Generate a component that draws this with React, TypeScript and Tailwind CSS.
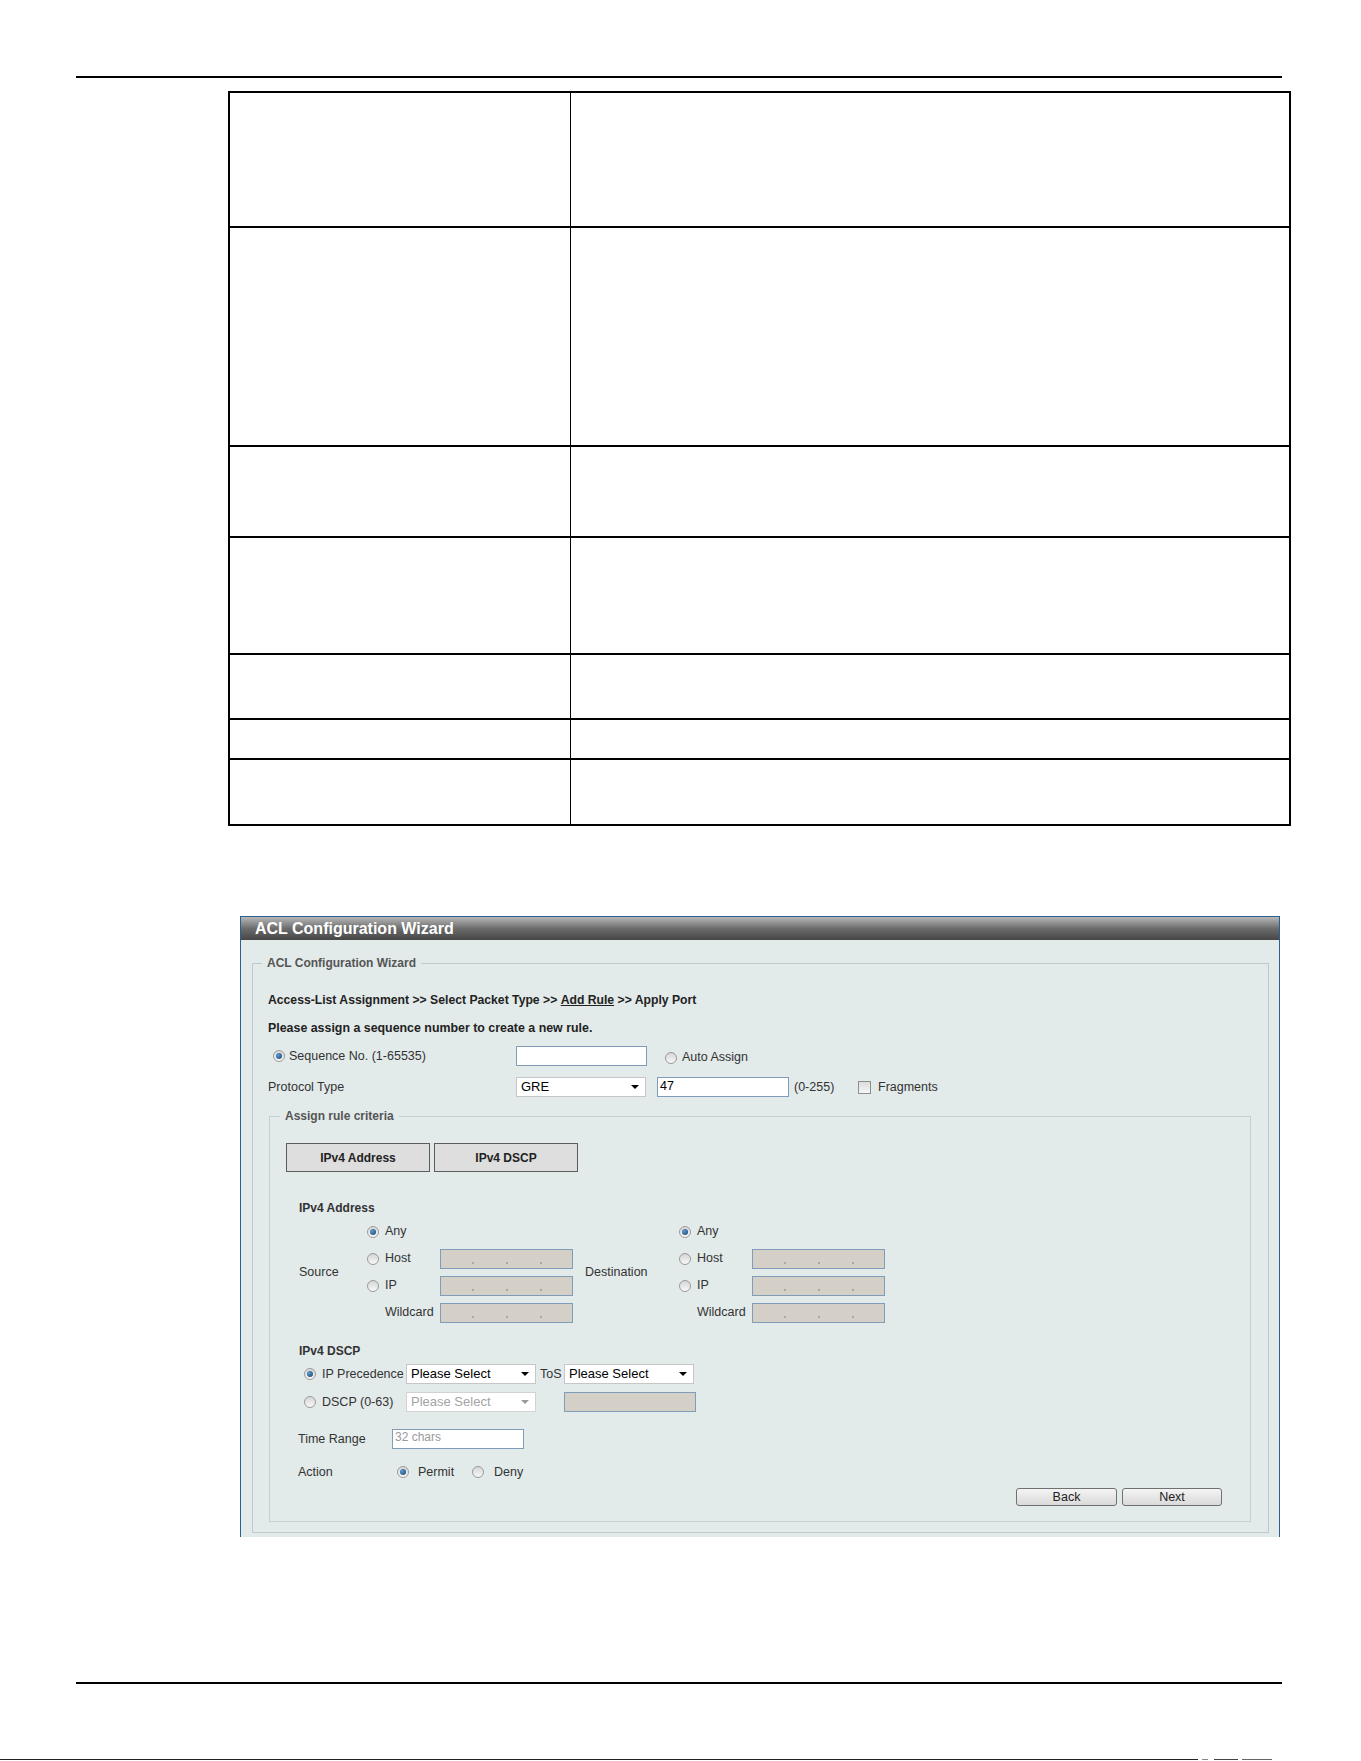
import React from "react";

const rowHeights = ["h-[135px]", "h-[219px]", "h-[91px]", "h-[117px]", "h-[65px]", "h-[40px]", "h-[64px]"];

function Radio({ checked }: { checked?: boolean }) {
    return (
        <span className="flex h-[12px] w-[12px] shrink-0 items-center justify-center rounded-full border border-[#9a9a9a] bg-[linear-gradient(to_bottom,#d6d6d6,#f8f8f8)]">
            {checked && (
                <span className="h-[6px] w-[6px] rounded-full bg-[radial-gradient(circle_at_35%_35%,#5f9ad0,#133f6a)]" />
            )}
        </span>
    );
}

function Arrow({ muted }: { muted?: boolean }) {
    return (
        <span
            className={`h-0 w-0 border-x-[4px] border-t-[4px] border-x-transparent ${
                muted ? "border-t-[#9a9a9a]" : "border-t-black"
            }`}
        />
    );
}

function Select({ value, className, disabled }: { value: string; className: string; disabled?: boolean }) {
    return (
        <div
            className={`flex h-[20px] shrink-0 items-center justify-between border bg-white pl-[4px] pr-[6px] text-[13px] ${
                disabled ? "border-[#d2d2d2] text-[#a3a3a3]" : "border-[#c6c6c6] text-black"
            } ${className}`}
        >
            <span>{value}</span>
            <Arrow muted={disabled} />
        </div>
    );
}

// greyed-out IPv4 box with the three octet dots
function IpBox() {
    return (
        <div className="flex h-[20px] w-[133px] shrink-0 items-end gap-[32px] border border-[#7f9db9] bg-[#d4d0c8] pb-[4px] pl-[31px]">
            <span className="h-[2px] w-[2px] bg-[#a8a8a8]" />
            <span className="h-[2px] w-[2px] bg-[#a8a8a8]" />
            <span className="h-[2px] w-[2px] bg-[#a8a8a8]" />
        </div>
    );
}

function AddressRows() {
    return (
        <div className="flex flex-col">
            <div className="flex h-[27px] items-center">
                <Radio checked />
                <span className="ml-[6px]">Any</span>
            </div>
            <div className="flex h-[27px] items-center">
                <Radio />
                <span className="ml-[6px] w-[55px]">Host</span>
                <IpBox />
            </div>
            <div className="flex h-[27px] items-center">
                <Radio />
                <span className="ml-[6px] w-[55px]">IP</span>
                <IpBox />
            </div>
            <div className="flex h-[27px] items-center">
                <span className="ml-[18px] w-[55px]">Wildcard</span>
                <IpBox />
            </div>
        </div>
    );
}

function WizardPanel() {
    return (
        <div className="ml-[240px] w-[1040px] border border-b-0 border-[#2a5f8f]">
            {/* title bar */}
            <div className="h-[23px] bg-[linear-gradient(to_bottom,#b8b8b8,#6c6c6c_50%,#464646)] pl-[14px] text-[16px] font-bold leading-[23px] text-white">
                ACL Configuration Wizard
            </div>

            <div className="bg-[#e2eaea] pb-[4px] pl-[11px] pr-[10px] pt-[16px] text-[12.5px] text-[#333]">
                <fieldset className="border border-[#bccacb] pb-[10px]">
                    <legend className="ml-[9px] px-[5px] text-[12px] font-bold leading-[14px] text-[#555]">
                        ACL Configuration Wizard
                    </legend>

                    <div className="pl-[15px]">
                        <div className="mt-[20px] flex h-[20px] items-center text-[12.2px] font-bold text-[#222]">
                            Access-List Assignment &gt;&gt; Select Packet Type &gt;&gt;&nbsp;
                            <span className="underline">Add Rule</span>&nbsp;&gt;&gt; Apply Port
                        </div>
                        <div className="mt-[8px] flex h-[20px] items-center text-[12.4px] font-bold text-[#222]">
                            Please assign a sequence number to create a new rule.
                        </div>

                        {/* sequence number */}
                        <div className="mt-[8px] flex h-[20px] items-center">
                            <div className="flex w-[248px] items-center pl-[5px]">
                                <Radio checked />
                                <span className="ml-[4px]">Sequence No. (1-65535)</span>
                            </div>
                            <div className="h-[20px] w-[131px] border border-[#7f9db9] bg-white" />
                            <div className="ml-[18px] mt-[3px] flex items-center">
                                <Radio />
                                <span className="ml-[5px]">Auto Assign</span>
                            </div>
                        </div>

                        {/* protocol */}
                        <div className="mt-[11px] flex h-[20px] items-center">
                            <span className="w-[248px]">Protocol Type</span>
                            <Select value="GRE" className="w-[130px]" />
                            <div className="ml-[11px] h-[20px] w-[132px] border border-[#7f9db9] bg-white pl-[2px] text-[12.5px] leading-[16px] text-black">
                                47
                            </div>
                            <span className="ml-[5px] w-[64px]">(0-255)</span>
                            <span className="h-[13px] w-[13px] border border-[#8e8e8e] bg-[linear-gradient(to_bottom,#dcdcdc,#f6f6f6)]" />
                            <span className="ml-[7px]">Fragments</span>
                        </div>

                        <fieldset className="ml-[1px] mr-[17px] mt-[12px] border border-[#c3cfd0] pb-[15px]">
                            <legend className="ml-[10px] px-[5px] text-[12px] font-bold leading-[14px] text-[#555]">
                                Assign rule criteria
                            </legend>

                            <div className="mt-[20px] flex gap-[4px] pl-[16px]">
                                <div className="flex h-[29px] w-[144px] items-center justify-center border border-[#5c5c5c] bg-[#dedede] text-[12px] font-bold text-[#222]">
                                    IPv4 Address
                                </div>
                                <div className="flex h-[29px] w-[144px] items-center justify-center border border-[#5c5c5c] bg-[#dedede] text-[12px] font-bold text-[#222]">
                                    IPv4 DSCP
                                </div>
                            </div>

                            <div className="mt-[26px] flex h-[20px] items-center pl-[29px] text-[12px] font-bold">
                                IPv4 Address
                            </div>
                            <div className="flex h-[108px] pl-[29px]">
                                <div className="flex w-[68px] items-center">Source</div>
                                <AddressRows />
                                <div className="ml-[12px] flex w-[94px] items-center">Destination</div>
                                <AddressRows />
                            </div>

                            <div className="mt-[15px] flex h-[20px] items-center pl-[29px] text-[12px] font-bold">
                                IPv4 DSCP
                            </div>
                            <div className="mt-[3px] flex h-[20px] items-center pl-[34px]">
                                <Radio checked />
                                <span className="ml-[6px] w-[84px]">IP Precedence</span>
                                <Select value="Please Select" className="w-[130px]" />
                                <span className="ml-[4px] w-[24px]">ToS</span>
                                <Select value="Please Select" className="w-[130px]" />
                            </div>
                            <div className="mt-[8px] flex h-[20px] items-center pl-[34px]">
                                <Radio />
                                <span className="ml-[6px] w-[84px]">DSCP (0-63)</span>
                                <Select value="Please Select" className="w-[130px]" disabled />
                                <div className="ml-[28px] h-[20px] w-[132px] border border-[#7f9db9] bg-[#d4d0c8]" />
                            </div>

                            <div className="mt-[17px] flex h-[20px] items-center pl-[28px]">
                                <span className="w-[94px]">Time Range</span>
                                <div className="h-[20px] w-[132px] border border-[#7f9db9] bg-white pl-[2px] text-[12px] leading-[14px] text-[#9a9a9a]">
                                    32 chars
                                </div>
                            </div>

                            <div className="mt-[13px] flex h-[20px] items-center pl-[28px]">
                                <span className="w-[99px]">Action</span>
                                <Radio checked />
                                <span className="ml-[9px] w-[54px]">Permit</span>
                                <Radio />
                                <span className="ml-[10px]">Deny</span>
                            </div>

                            <div className="mt-[6px] flex justify-end gap-[5px] pr-[28px]">
                                <button className="h-[18px] w-[101px] rounded-[3px] border border-[#707070] bg-[linear-gradient(to_bottom,#f4f4f4,#dadada)] text-[12.5px] leading-[16px] text-[#222]">
                                    Back
                                </button>
                                <button className="h-[18px] w-[100px] rounded-[3px] border border-[#707070] bg-[linear-gradient(to_bottom,#f4f4f4,#dadada)] text-[12.5px] leading-[16px] text-[#222]">
                                    Next
                                </button>
                            </div>
                        </fieldset>
                    </div>
                </fieldset>
            </div>
        </div>
    );
}

export default function App() {
    return (
        <div className="h-[1761px] w-[1361px] overflow-hidden bg-white pt-[76px] font-['Liberation_Sans',Arial,sans-serif]">
            <div className="ml-[76px] h-[2px] w-[1206px] bg-black" />

            {/* parameter table */}
            <div className="ml-[228px] mt-[13px] w-[1063px] border-2 border-black">
                {rowHeights.map((h, i) => (
                    <div key={i} className={`flex border-b-2 border-black last:border-b-0 ${h}`}>
                        <div className="w-[341px] border-r border-black" />
                        <div className="flex-1" />
                    </div>
                ))}
            </div>

            <div className="mt-[90px]">
                <WizardPanel />
            </div>

            <div className="ml-[76px] mt-[145px] h-[2px] w-[1206px] bg-black" />
            <div className="mt-[75px] flex h-[1px] items-center">
                <div className="h-[1px] w-[1198px] bg-[#222]" />
                <div className="ml-[4px] h-[1px] w-[6px] bg-[#888]" />
                <div className="ml-[6px] h-[1px] w-[24px] bg-[#444]" />
                <div className="ml-[4px] h-[1px] w-[30px] bg-[#666]" />
            </div>
        </div>
    );
}
